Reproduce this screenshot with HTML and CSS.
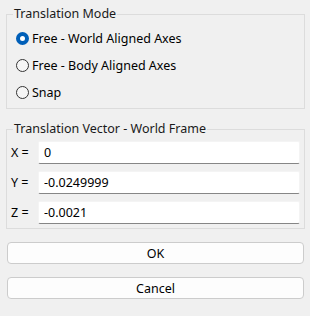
FILE: index.html
```html
<!DOCTYPE html>
<html lang="en">
<head>
    <meta charset="UTF-8">
    <title>Translation</title>
    <link rel="stylesheet" href="styles.css">
</head>
<body>
    <div class="dialog">
        <fieldset class="group">
            <legend>Translation Mode</legend>
            <label class="radio">
                <input type="radio" name="mode" checked>
                <span class="dot"></span>
                <span>Free - World Aligned Axes</span>
            </label>
            <label class="radio">
                <input type="radio" name="mode">
                <span class="dot"></span>
                <span>Free - Body Aligned Axes</span>
            </label>
            <label class="radio">
                <input type="radio" name="mode">
                <span class="dot"></span>
                <span>Snap</span>
            </label>
        </fieldset>

        <fieldset class="group vector">
            <legend>Translation Vector - World Frame</legend>
            <div class="field">
                <label for="vx">X =</label>
                <input type="text" id="vx" value="0">
            </div>
            <div class="field">
                <label for="vy">Y =</label>
                <input type="text" id="vy" value="-0.0249999">
            </div>
            <div class="field">
                <label for="vz">Z =</label>
                <input type="text" id="vz" value="-0.0021">
            </div>
        </fieldset>

        <div class="buttons">
            <button type="button">OK</button>
            <button type="button">Cancel</button>
        </div>
    </div>
</body>
</html>
```

FILE: styles.css
```css
body {
    margin: 0;
    background-color: #f0f0f0;
    font-family: "Noto Sans", sans-serif;
    font-size: 12.5px;
    color: #000;
}

.dialog {
    padding: 7px 5px 0 6px;
}

.group {
    margin: 0;
    padding: 4px 9px 2px 9px;
    border: 1px solid #dcdcdc;
}

.group legend {
    margin-left: -3px;
    padding: 0 1px;
    line-height: 14px;
    color: #1a1a1a;
}

.radio {
    display: flex;
    align-items: center;
    height: 27px;
}

.radio input {
    display: none;
}

.dot {
    width: 11px;
    height: 11px;
    border: 1px solid #333;
    border-radius: 50%;
    margin-right: 3px;
    box-sizing: content-box;
    background-color: #f6f6f6;
}

.radio input:checked + .dot {
    width: 5px;
    height: 5px;
    border: 4px solid #005fb8;
    background-color: #fff;
}

.vector {
    margin-top: 13px;
    padding: 5px 4px 4px 4px;
}

.vector legend {
    margin-left: 2px;
}

.field {
    display: flex;
    align-items: center;
    margin-bottom: 7px;
}

.field:last-child {
    margin-bottom: 0;
}

.field label {
    width: 27px;
    flex: none;
}

.field input {
    flex: 1;
    min-width: 0;
    height: 23px;
    box-sizing: border-box;
    padding: 0 0 0 5px;
    border: 1px solid #f4f4f4;
    border-bottom: 1px solid #868686;
    border-radius: 2px;
    background-color: #fff;
    font-family: inherit;
    font-size: 12.5px;
    color: #000;
}

.buttons {
    display: flex;
    flex-direction: column;
    gap: 13px;
    margin: 13px 1px 0 1px;
}

button {
    height: 22px;
    border: 1px solid #cccccc;
    border-radius: 4px;
    background-color: #fdfdfd;
    font-family: inherit;
    font-size: 12.5px;
    color: #000;
    padding: 0;
}
```
